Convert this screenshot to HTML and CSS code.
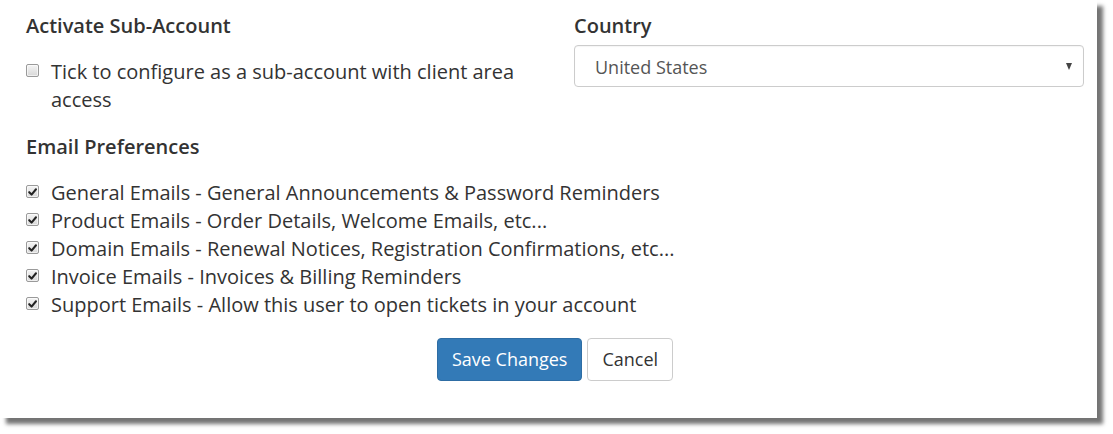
FILE: index.html
```html
<!DOCTYPE html>
<html>
<head>
<meta charset="utf-8">
<link rel="stylesheet" href="styles.css">
</head>
<body>
<div class="panel">
  <div class="row">
    <div class="col">
      <div class="heading">Activate Sub-Account</div>
      <label class="check check-wrap">
        <span class="box"></span>
        <span class="text">Tick to configure as a sub-account with client area access</span>
      </label>
    </div>
    <div class="col">
      <div class="heading">Country</div>
      <div class="select">
        <span class="select-value">United States</span>
        <span class="caret"></span>
      </div>
    </div>
  </div>
  <div class="heading heading-email">Email Preferences</div>
  <div class="list">
    <label class="check"><span class="box checked"><svg viewBox="0 0 12 12" width="12" height="12"><path d="M2.4 6.2 L5 8.8 L9.8 3" fill="none" stroke="#222" stroke-width="2.2" stroke-linecap="round" stroke-linejoin="round"/></svg></span><span class="text">General Emails - General Announcements &amp; Password Reminders</span></label>
    <label class="check"><span class="box checked"><svg viewBox="0 0 12 12" width="12" height="12"><path d="M2.4 6.2 L5 8.8 L9.8 3" fill="none" stroke="#222" stroke-width="2.2" stroke-linecap="round" stroke-linejoin="round"/></svg></span><span class="text">Product Emails - Order Details, Welcome Emails, etc...</span></label>
    <label class="check"><span class="box checked"><svg viewBox="0 0 12 12" width="12" height="12"><path d="M2.4 6.2 L5 8.8 L9.8 3" fill="none" stroke="#222" stroke-width="2.2" stroke-linecap="round" stroke-linejoin="round"/></svg></span><span class="text">Domain Emails - Renewal Notices, Registration Confirmations, etc...</span></label>
    <label class="check"><span class="box checked"><svg viewBox="0 0 12 12" width="12" height="12"><path d="M2.4 6.2 L5 8.8 L9.8 3" fill="none" stroke="#222" stroke-width="2.2" stroke-linecap="round" stroke-linejoin="round"/></svg></span><span class="text">Invoice Emails - Invoices &amp; Billing Reminders</span></label>
    <label class="check"><span class="box checked"><svg viewBox="0 0 12 12" width="12" height="12"><path d="M2.4 6.2 L5 8.8 L9.8 3" fill="none" stroke="#222" stroke-width="2.2" stroke-linecap="round" stroke-linejoin="round"/></svg></span><span class="text">Support Emails - Allow this user to open tickets in your account</span></label>
  </div>
  <div class="actions">
    <button class="btn btn-primary">Save Changes</button>
    <button class="btn btn-default">Cancel</button>
  </div>
</div>
</body>
</html>
```
FILE: styles.css
```css
html, body {
  margin: 0;
  padding: 0;
  background: #fff;
}
body {
  font-family: "Open Sans", "Liberation Sans", sans-serif;
  font-size: 20px;
  line-height: 28px;
  color: #333;
  min-height: 434px;
}
.panel {
  width: 1097px;
  height: 418px;
  box-sizing: border-box;
  background: #fff;
  padding: 12px 13px 0 26px;
  box-shadow: 6px 6px 4px rgba(0, 0, 0, 0.55);
}
.row {
  display: grid;
  grid-template-columns: 510px 510px;
  column-gap: 38px;
}
.heading {
  font-weight: 600;
  color: #333;
}
.check {
  display: flex;
  align-items: flex-start;
  gap: 12px;
}
.check-wrap {
  margin-top: 18px;
}
.box {
  flex: none;
  width: 11px;
  height: 11px;
  margin-top: 6px;
  border: 1px solid #9a9a9a;
  border-radius: 2px;
  background: linear-gradient(#f4f4f4, #d8d8d8);
  box-shadow: inset 0 0 0 1px rgba(255,255,255,0.6);
  display: flex;
  align-items: center;
  justify-content: center;
}
.box.checked svg {
  display: block;
}
.select {
  margin-top: 5px;
  height: 42px;
  box-sizing: border-box;
  border: 1px solid #ccc;
  border-radius: 4px;
  display: flex;
  align-items: center;
  justify-content: space-between;
  padding: 2px 11px 0 20px;
  color: #555;
  font-size: 18px;
  box-shadow: inset 0 1px 1px rgba(0,0,0,0.04);
}
.caret {
  width: 0;
  height: 0;
  border-left: 3.5px solid transparent;
  border-right: 3.5px solid transparent;
  border-top: 7px solid #444;
  margin-top: -1px;
}
.heading-email {
  margin-top: 19px;
}
.list {
  margin-top: 18px;
  display: flex;
  flex-direction: column;
}
.actions {
  margin-top: 19px;
  display: flex;
  justify-content: center;
  gap: 5px;
  width: 1058px;
}
.btn {
  font-family: "Open Sans", "Liberation Sans", sans-serif;
  font-size: 18px;
  height: 43px;
  border-radius: 4px;
  border: 1px solid;
  padding: 0 14px 2px;
  cursor: pointer;
}
.btn-primary {
  background: #337ab7;
  border-color: #2e6da4;
  color: #fff;
}
.btn-default {
  background: #fff;
  border-color: #ccc;
  color: #333;
}
```
